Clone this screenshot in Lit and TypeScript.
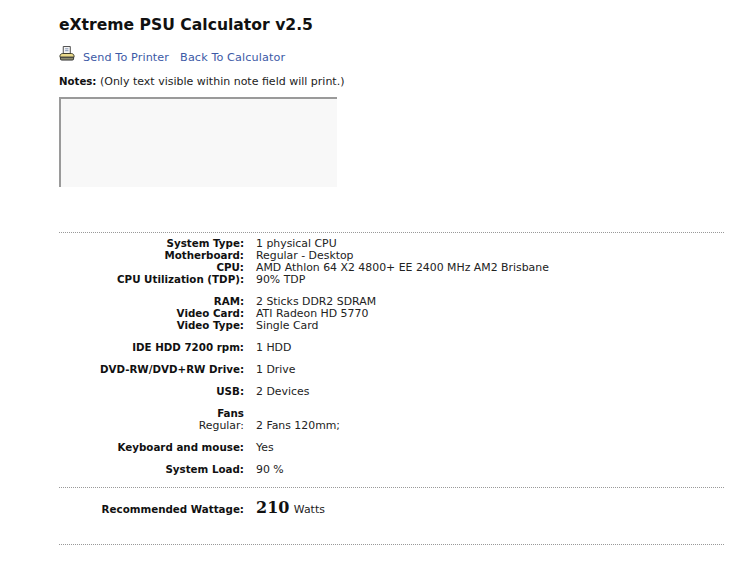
import { LitElement, html, css } from "lit";
import { customElement } from "lit/decorators.js";

type Row = [string, string, boolean?];
const groups: Row[][] = [
  [
    ["System Type:", "1 physical CPU"],
    ["Motherboard:", "Regular - Desktop"],
    ["CPU:", "AMD Athlon 64 X2 4800+ EE 2400 MHz AM2 Brisbane"],
    ["CPU Utilization (TDP):", "90% TDP"],
  ],
  [
    ["RAM:", "2 Sticks DDR2 SDRAM"],
    ["Video Card:", "ATI Radeon HD 5770"],
    ["Video Type:", "Single Card"],
  ],
  [["IDE HDD 7200 rpm:", "1 HDD"]],
  [["DVD-RW/DVD+RW Drive:", "1 Drive"]],
  [["USB:", "2 Devices"]],
  [
    ["Fans", ""],
    ["Regular:", "2 Fans 120mm;", true],
  ],
  [["Keyboard and mouse:", "Yes"]],
  [["System Load:", "90 %"]],
];

@customElement("app-root")
export class AppRoot extends LitElement {
  static styles = css`
    :host {
      display: block;
      height: 570px;
      background: #fff;
      font-family: "DejaVu Sans", Verdana, sans-serif;
      font-size: 10.9px;
      line-height: 12px;
      color: #222;
      overflow: hidden;
    }
    .page {
      padding: 15px 15px 0 59px;
    }
    h1 {
      margin: 0;
      font-size: 15.6px;
      line-height: 20px;
      font-weight: 700;
      color: #111;
    }
    .links {
      display: flex;
      align-items: flex-end;
      margin-top: 10px;
      height: 19px;
    }
    .links svg {
      display: block;
      margin-bottom: 3px;
    }
    .links a {
      color: #3c5aa6;
      text-decoration: none;
      margin-left: 11px;
      line-height: 12px;
      white-space: nowrap;
      font-size: 11.2px;
      letter-spacing: 0.12px;
    }
    .links a.first {
      margin-left: 8px;
    }
    .notes {
      margin-top: 12px;
      font-size: 11px;
    }
    .notes b {
      color: #111;
      font-size: 10.2px;
    }
    .field {
      box-sizing: border-box;
      width: 278px;
      height: 90px;
      margin-top: 9px;
      background: #f8f8f8;
      border-top: 2px solid #9a9a9a;
      border-left: 2px solid #9a9a9a;
    }
    .rule {
      border-top: 1px dotted #999;
    }
    .summary {
      margin-top: 45px;
      padding: 4px 0 12px;
      display: flex;
      flex-direction: column;
      gap: 10px;
    }
    .row {
      display: grid;
      grid-template-columns: 185px 1fr;
      column-gap: 12px;
      height: 12px;
    }
    .label {
      text-align: right;
      font-weight: 700;
      color: #111;
      white-space: nowrap;
      font-size: 10.3px;
    }
    .label.plain {
      font-weight: 400;
      color: #222;
      font-size: 10.9px;
      padding-top: 1px;
    }
    .value {
      white-space: nowrap;
      padding-top: 1px;
    }
    .total {
      display: grid;
      grid-template-columns: 185px 1fr;
      column-gap: 12px;
      align-items: center;
      height: 34px;
      margin-top: 4px;
      margin-bottom: 18px;
    }
    .watts {
      white-space: nowrap;
      line-height: 22px;
    }
    .watts strong {
      font-family: "DejaVu Serif", "Liberation Serif", serif;
      font-size: 16px;
      color: #111;
      margin-right: 1px;
    }
  `;

  render() {
    return html`
      <div class="page">
        <h1>eXtreme PSU Calculator v2.5</h1>
        <div class="links">
          <svg width="16" height="15" viewBox="0 0 17 16">
            <path d="M4.5 0.5H12V8H4.5Z" fill="#f4f4f4" stroke="#444" />
            <path d="M6.5 3H10M6.5 5H10" stroke="#7d8fb0" />
            <path
              d="M1 10.5C1 9 2.5 8 4 8H13C14.5 8 16 9 16 10.5V12H1Z"
              fill="#e9d98a"
              stroke="#3a3a2a"
            />
            <path d="M1.5 12H15.5V14C15.5 14.6 15 15 14 15H3C2 15 1.5 14.6 1.5 14Z" fill="#8d8d70" stroke="#333" />
          </svg>
          <a class="first" href="#">Send To Printer</a>
          <a href="#">Back To Calculator</a>
        </div>
        <div class="notes"><b>Notes:</b> (Only text visible within note field will print.)</div>
        <div class="field"></div>
        <div class="summary rule">
          ${groups.map(
            (g) => html`<div>
              ${g.map(
                ([l, v, plain]) => html`<div class="row">
                  <div class="label ${plain ? "plain" : ""}">${l}</div>
                  <div class="value">${v}</div>
                </div>`
              )}
            </div>`
          )}
        </div>
        <div class="rule"></div>
        <div class="total">
          <div class="label">Recommended Wattage:</div>
          <div class="watts"><strong>210</strong> Watts</div>
        </div>
        <div class="rule"></div>
      </div>
    `;
  }
}
